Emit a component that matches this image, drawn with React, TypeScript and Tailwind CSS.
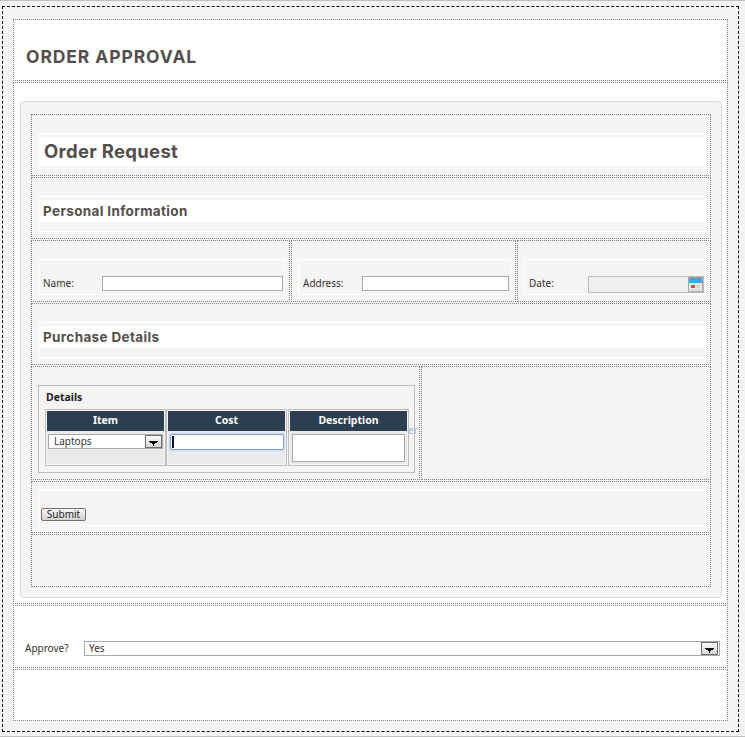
import React from 'react';

const heading = "font-['Inter',sans-serif] font-bold text-[#544f4d]";
const label = "font-['Noto_Sans',sans-serif] text-[10px] leading-[15px] text-[#333333]";
const rowCell = 'border border-dotted border-[#808080]';

const DropButton = ({ className = '' }: { className?: string }) => (
  <div className={`flex items-end justify-center border border-[#6f6f6f] bg-gradient-to-b from-[#fafafa] to-[#d8d8d8] ${className}`}>
    <svg width="9" height="5" viewBox="0 0 9 5" className="mb-px">
      <path d="M0 0h9v1H8v1H6v1H5v2H4V3H3V2H1V1H0z" fill="#000" />
    </svg>
  </div>
);

const CalendarIcon = () => (
  <svg width="15" height="15" viewBox="0 0 15 15">
    <rect x="0.5" y="0.5" width="14" height="14" fill="#e4e8e8" stroke="#a8a8a8" />
    <rect x="1" y="1" width="13" height="5" fill="#3ba6ea" />
    <rect x="3" y="0" width="2" height="3" fill="#7b8f9c" />
    <rect x="10" y="0" width="2" height="3" fill="#7b8f9c" />
    <rect x="3" y="8" width="4" height="3" fill="#e8464a" />
    <rect x="8" y="8" width="4" height="3" fill="#cfd6d6" />
    <rect x="3" y="12" width="9" height="1" fill="#cfd6d6" />
  </svg>
);

const Frame = ({ className = '', children }: { className?: string; children?: React.ReactNode }) => (
  <div className={`h-[36px] border border-white ${className}`}>{children}</div>
);

const SectionTitle = ({ title }: { title: string }) => (
  <div className={`${rowCell} mt-px h-[62px] pt-[18px] pl-[6px]`}>
    <Frame className="w-[668px] pl-px pt-[3px]">
      <div className={`flex h-[22px] items-center rounded-[2px] bg-white pl-[3px] text-[13.5px] tracking-[0.35px] ${heading}`}>{title}</div>
    </Frame>
  </div>
);

const HeadCell = ({ title, className = '', children }: { title: string; className?: string; children: React.ReactNode }) => (
  <div className={`h-[57px] w-[121px] border border-[#bfbfbf] p-px ${className}`}>
    <div className="flex h-[20px] items-center justify-center bg-[#2c3e50] font-['Noto_Sans',sans-serif] text-[10.5px] font-bold text-white">{title}</div>
    <div className="h-[33px] bg-[#e9eaec] pt-[3px]">{children}</div>
  </div>
);

export default function App() {
  return (
    <div className="h-[737px] w-[745px] overflow-hidden border-y border-[#c0c0c0] bg-[#f5f4f2] pl-[2px] pt-[5px]">
      <div className="h-[726px] w-[737px] border border-dashed border-black pl-[10px] pt-[12px]">
        <div className="w-[715px] bg-white">
          <div className={`${rowCell} flex h-[62px] items-end pb-[13px] pl-[12px]`}>
            <h1 className={`text-[17.5px] leading-[20px] tracking-[0.9px] ${heading}`}>ORDER APPROVAL</h1>
          </div>

          <div className={`${rowCell} mt-px h-[522px] pl-[6px] pt-[18px]`}>
            <div className="h-[497px] w-[702px] rounded-[4px] border border-[#d9d9d9] bg-[#f5f4f2] pl-[10px] pt-[12px]">
              <div className="w-[680px]">
                <div className={`${rowCell} h-[62px] pl-[6px] pt-[18px]`}>
                  <Frame className="w-[668px] pl-px pt-[3px]">
                    <div className={`flex h-[29px] items-center rounded-[2px] bg-white pl-[4px] pt-px text-[18.5px] tracking-[0.3px] ${heading}`}>Order Request</div>
                  </Frame>
                </div>

                <SectionTitle title="Personal Information" />

                <div className="mt-px flex h-[62px]">
                  <div className={`${rowCell} mr-px w-[259px] pl-[6px] pt-[18px]`}>
                    <Frame className="flex w-[247px] items-end pb-[3px] pl-[4px]">
                      <span className={`${label} w-[59px]`}>Name:</span>
                      <input readOnly className="h-[15px] w-[181px] border border-[#a9a9a9] bg-white" />
                    </Frame>
                  </div>
                  <div className={`${rowCell} mr-px w-[225px] pl-[6px] pt-[18px]`}>
                    <Frame className="flex w-[213px] items-end pb-[3px] pl-[4px]">
                      <span className={`${label} w-[59px]`}>Address:</span>
                      <input readOnly className="h-[15px] w-[147px] border border-[#a9a9a9] bg-white" />
                    </Frame>
                  </div>
                  <div className={`${rowCell} w-[194px] pl-[6px] pt-[18px]`}>
                    <Frame className="flex w-[182px] items-end pb-px pl-[4px]">
                      <span className={`${label} mb-[2px] w-[59px]`}>Date:</span>
                      <div className="flex h-[17px] w-[116px] items-start justify-end border border-[#bdbbb8] bg-[#f0efed]">
                        <CalendarIcon />
                      </div>
                    </Frame>
                  </div>
                </div>

                <SectionTitle title="Purchase Details" />

                <div className="mt-px flex h-[114px]">
                  <div className={`${rowCell} mr-px w-[389px] pl-[6px] pt-[18px]`}>
                    <div className="relative h-[88px] w-[377px] border border-[#bdbdbd] pl-[6px] pt-[4px]">
                      <div className="h-[19px] pl-px font-['Noto_Sans',sans-serif] text-[10.5px] font-bold leading-[14px] text-[#222222]">Details</div>
                      <div className="flex">
                        <HeadCell title="Item">
                          <div className="ml-px flex h-[15px] w-[115px] items-center justify-between border border-[#a9a9a9] bg-white pl-[5px]">
                            <span className={label}>Laptops</span>
                            <DropButton className="h-[13px] w-[17px]" />
                          </div>
                        </HeadCell>
                        <HeadCell title="Cost">
                          <div className="ml-[2px] flex h-[16px] w-[114px] items-center rounded-[2px] border border-[#7da2e0] bg-white pl-px shadow-[0_0_2px_#7da2e0]">
                            <span className="h-[12px] w-[2px] bg-[#101040]" />
                          </div>
                        </HeadCell>
                        <HeadCell title="Description" className="ml-px">
                          <textarea readOnly className="ml-[2px] block h-[28px] w-[113px] resize-none border border-[#a9a9a9] bg-white" />
                        </HeadCell>
                      </div>
                      <span className="absolute left-[369px] top-[37px] font-['Noto_Sans',sans-serif] text-[10px] leading-[14px] text-[#9db7d3]">er</span>
                    </div>
                  </div>
                  <div className={`${rowCell} w-[290px]`} />
                </div>

                <div className={`${rowCell} mt-px h-[52px] pl-[6px] pt-[8px]`}>
                  <Frame className="flex w-[668px] items-end pb-[4px] pl-[2px]">
                    <button className="flex h-[13px] w-[45px] items-center justify-center rounded-[2px] border border-[#707070] bg-gradient-to-b from-[#f6f6f6] to-[#d4d4d4] pb-[2px] font-['Noto_Sans',sans-serif] text-[10px] leading-none text-[#222222]">Submit</button>
                  </Frame>
                </div>

                <div className={`${rowCell} mt-px h-[53px]`} />
              </div>
            </div>
          </div>

          <div className={`${rowCell} mt-px flex h-[63px] items-end pb-[11px] pl-[11px]`}>
            <span className={`${label} w-[59px]`}>Approve?</span>
            <div className="flex h-[15px] w-[636px] items-center justify-between border border-[#a9a9a9] bg-white pl-[4px] pr-px">
              <span className={label}>Yes</span>
              <DropButton className="h-[13px] w-[17px]" />
            </div>
          </div>

          <div className={`${rowCell} mt-px h-[52px]`} />
        </div>
      </div>
    </div>
  );
}
